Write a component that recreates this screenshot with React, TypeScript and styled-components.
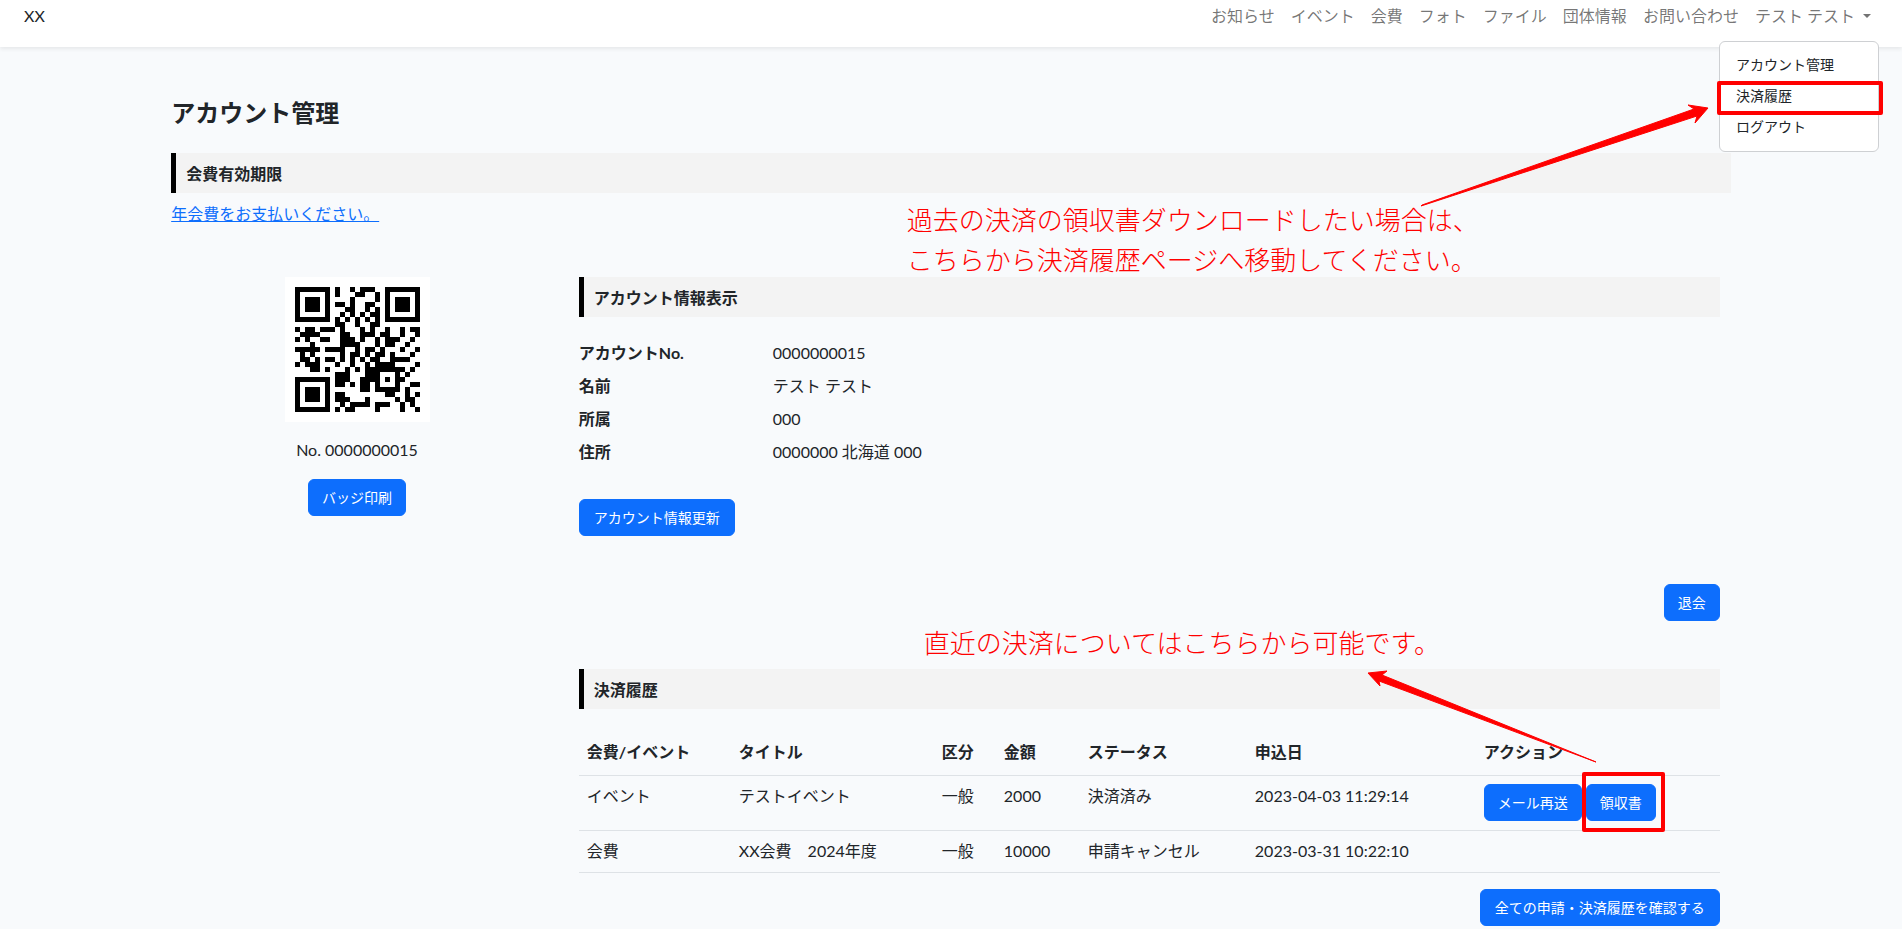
import React from 'react';
import styled, { createGlobalStyle } from 'styled-components';

const GlobalStyle = createGlobalStyle`
  *, *::before, *::after { box-sizing: border-box; }
  body {
    margin: 0;
    background: #f8fafc;
    color: #212529;
    font-family: Lato, "Noto Sans CJK JP", sans-serif;
    font-size: 16px;
    font-weight: 400;
    line-height: 25px;
  }
  h1, h2, p, dl, dd, ul { margin: 0; padding: 0; }
  button { font-family: inherit; font-weight: inherit; }
`;

const Header = styled.header`
  position: relative;
  z-index: 2;
  display: flex;
  justify-content: space-between;
  align-items: flex-start;
  height: 47px;
  padding: 3px 23px 0 24px;
  background: #fff;
  box-shadow: 0 2px 4px rgba(0, 0, 0, 0.075);
`;

const Brand = styled.a`
  color: #212529;
  text-decoration: none;
`;

const Nav = styled.nav`
  display: flex;
`;

const NavLink = styled.a`
  padding: 0 8px;
  color: rgba(0, 0, 0, 0.55);
  text-decoration: none;
  white-space: nowrap;
`;

const Dropdown = styled.div`
  position: relative;
`;

const DropdownToggle = styled.button`
  display: flex;
  align-items: center;
  gap: 8px;
  padding: 0 8px;
  border: 0;
  background: none;
  color: rgba(0, 0, 0, 0.55);
  font-size: 16px;
  line-height: 25px;
  white-space: nowrap;

  &::after {
    content: "";
    border-top: 4px solid;
    border-left: 4px solid transparent;
    border-right: 4px solid transparent;
  }
`;

const DropdownMenu = styled.div`
  position: absolute;
  top: 38px;
  right: 0;
  width: 160px;
  padding: 7px 0 9px;
  border: 1px solid #ced0d3;
  border-radius: 6px;
  background: #fff;
`;

const DropdownItem = styled.a<{ $marked?: boolean }>`
  position: relative;
  display: block;
  padding: 3px 16px;
  color: #212529;
  font-size: 14px;
  text-decoration: none;

  &::after {
    content: ${(p) => (p.$marked ? '""' : 'none')};
    position: absolute;
    inset: 1px -5px -4px -3px;
    border: 4px solid #f00;
    border-radius: 2px;
  }
`;

const Main = styled.main`
  margin: 0 9%;
  padding: 48px 0 4px;
`;

const PageTitle = styled.h1`
  margin-bottom: 22px;
  font-size: 24px;
  font-weight: 600;
  line-height: 36px;
`;

const SectionTitle = styled.h2`
  padding: 8px 10px 7px;
  border-left: 5px solid #000;
  background: #f3f3f3;
  font-size: 16px;
  font-weight: 700;
  line-height: 25px;
`;

const FeeNotice = styled.p`
  padding-top: 8px;
`;

const TextLink = styled.a`
  color: #0d6efd;
`;

const Columns = styled.div`
  display: flex;
  gap: 36px;
  margin-top: 51px;
  padding-right: 11px;
`;

const BadgeColumn = styled.aside`
  display: flex;
  flex: 0 0 24%;
  flex-direction: column;
  align-items: center;
`;

const QrImage = styled.svg`
  width: 145px;
  height: 145px;
  margin-bottom: 15px;
  background: #fff;
`;

const BadgeNumber = styled.p`
  margin-bottom: 17px;
`;

const Details = styled.div`
  flex: 1;
  min-width: 0;
`;

const Section = styled.section`
  position: relative;
`;

const Button = styled.button<{ $wide?: boolean }>`
  padding: 5px ${(p) => (p.$wide ? 14 : 13)}px;
  border: 1px solid #0d6efd;
  border-radius: 6px;
  background: #0d6efd;
  color: #fff;
  font-size: 14px;
  font-weight: 400;
  line-height: 25px;
  white-space: nowrap;
`;

const Profile = styled.dl`
  display: grid;
  grid-template-columns: 17% 1fr;
  row-gap: 8px;
  margin: 23px 0 35px;
`;

const ProfileLabel = styled.dt`
  font-weight: 700;
`;

const EndRow = styled.div<{ $top: number; $bottom: number }>`
  display: flex;
  justify-content: flex-end;
  padding: ${(p) => p.$top}px 0 ${(p) => p.$bottom}px;
`;

const Table = styled.table`
  width: 100%;
  margin-top: 25px;
  border-collapse: collapse;
  table-layout: fixed;
  text-align: left;
`;

const HeadCell = styled.th`
  height: 41px;
  padding: 5px 8px 11px;
  border-bottom: 1px solid #dee2e6;
  font-weight: 700;
  white-space: nowrap;
`;

const Cell = styled.td`
  padding: 7px 8px 9px;
  border-bottom: 1px solid #dee2e6;
  vertical-align: top;
  white-space: nowrap;
`;

const Actions = styled.div`
  display: flex;
  gap: 4px;
  padding-top: 1px;
`;

const Marked = styled.div`
  position: relative;

  &::after {
    content: "";
    position: absolute;
    inset: -12px -9px -11px -4px;
    border: 4px solid #f00;
    border-radius: 2px;
  }
`;

const Note = styled.p<{ $top: number; $left: number }>`
  position: absolute;
  top: ${(p) => p.$top}px;
  left: ${(p) => p.$left}px;
  color: #f00;
  font-size: 26px;
  font-weight: 300;
  line-height: 40px;
  white-space: nowrap;
`;

const MenuArrow = styled.svg`
  position: absolute;
  top: 58px;
  right: calc(100% + 10px);
  width: 290px;
  height: 110px;
  fill: #f00;
  pointer-events: none;
`;

const ReceiptArrow = styled.svg`
  position: absolute;
  top: -1px;
  right: 123px;
  width: 232px;
  height: 96px;
  fill: #f00;
  pointer-events: none;
`;

const qrRows = [
  '1111111010010111001111111',
  '1000001010001100101000001',
  '1011101000010000101011101',
  '1011101011010011001011101',
  '1011101000110010101011101',
  '1000001001010101101000001',
  '1111111010101010101111111',
  '0000000011001001100000000',
  '1011011101000101001001011',
  '0111100001100111011001001',
  '1010011001110100101110010',
  '0001000001111000101100100',
  '1111101111001011010001001',
  '0101000001011010110100010',
  '0110101101010101100111100',
  '1011100010010010111100001',
  '0001101000101011111111010',
  '0000000011100011100010100',
  '1111111011100111101011000',
  '1000001011010110100010011',
  '1011101000000110111110100',
  '1011101011000000001100101',
  '1011101011100010000010110',
  '1000001001011110111001010',
  '1111111010110000100001001',
];

const qrPath = qrRows
  .map((row, y) =>
    [...row].map((bit, x) => (bit === '1' ? `M${x + 2} ${y + 2}h1v1h-1z` : '')).join('')
  )
  .join('');

const navItems = ['お知らせ', 'イベント', '会費', 'フォト', 'ファイル', '団体情報', 'お問い合わせ'];

const profile = [
  ['アカウントNo.', '0000000015'],
  ['名前', 'テスト テスト'],
  ['所属', '000'],
  ['住所', '0000000 北海道 000'],
];

const columns = [
  { label: '会費/イベント', width: 152 },
  { label: 'タイトル', width: 203 },
  { label: '区分', width: 62 },
  { label: '金額', width: 84 },
  { label: 'ステータス', width: 167 },
  { label: '申込日', width: 229 },
  { label: 'アクション', width: undefined },
];

const payments = [
  { cells: ['イベント', 'テストイベント', '一般', '2000', '決済済み', '2023-04-03 11:29:14'], paid: true },
  { cells: ['会費', 'XX会費　2024年度', '一般', '10000', '申請キャンセル', '2023-03-31 10:22:10'], paid: false },
];

export default function App() {
  return (
    <>
      <GlobalStyle />
      <Header>
        <Brand href="#">XX</Brand>
        <Nav>
          {navItems.map((item) => (
            <NavLink key={item} href="#">{item}</NavLink>
          ))}
          <Dropdown>
            <DropdownToggle type="button" aria-expanded="true">テスト テスト</DropdownToggle>
            <DropdownMenu>
              <DropdownItem href="#">アカウント管理</DropdownItem>
              <DropdownItem href="#" $marked>決済履歴</DropdownItem>
              <DropdownItem href="#">ログアウト</DropdownItem>
              <MenuArrow viewBox="0 0 290 110" aria-hidden="true">
                <path d="M1 106 L2 105 L274 9 L268 5 L288 8 L275 23 L277 16 Z" stroke="#f00" strokeWidth="1" />
              </MenuArrow>
            </DropdownMenu>
          </Dropdown>
        </Nav>
      </Header>

      <Main>
        <PageTitle>アカウント管理</PageTitle>
        <SectionTitle>会費有効期限</SectionTitle>
        <FeeNotice>
          <TextLink href="#">年会費をお支払いください。</TextLink>
        </FeeNotice>

        <Columns>
          <BadgeColumn>
            <QrImage viewBox="0 0 29 29" shapeRendering="crispEdges" role="img" aria-label="QR">
              <path d={qrPath} />
            </QrImage>
            <BadgeNumber>No. 0000000015</BadgeNumber>
            <Button type="button">バッジ印刷</Button>
          </BadgeColumn>

          <Details>
            <Section>
              <SectionTitle>アカウント情報表示</SectionTitle>
              <Profile>
                {profile.map(([label, value]) => (
                  <React.Fragment key={label}>
                    <ProfileLabel>{label}</ProfileLabel>
                    <dd>{value}</dd>
                  </React.Fragment>
                ))}
              </Profile>
              <Button type="button" $wide>アカウント情報更新</Button>
              <Note $top={-77} $left={328}>
                過去の決済の領収書ダウンロードしたい場合は、
                <br />
                こちらから決済履歴ページへ移動してください。
              </Note>
            </Section>

            <EndRow $top={48} $bottom={48}>
              <Button type="button">退会</Button>
            </EndRow>

            <Section>
              <SectionTitle>決済履歴</SectionTitle>
              <Table>
                <colgroup>
                  {columns.map((c) => (
                    <col key={c.label} width={c.width} />
                  ))}
                </colgroup>
                <thead>
                  <tr>
                    {columns.map((c) => (
                      <HeadCell key={c.label} scope="col">{c.label}</HeadCell>
                    ))}
                  </tr>
                </thead>
                <tbody>
                  {payments.map((payment) => (
                    <tr key={payment.cells[5]}>
                      {payment.cells.map((text, i) => (
                        <Cell key={i}>{text}</Cell>
                      ))}
                      <Cell>
                        {payment.paid && (
                          <Actions>
                            <Button type="button">メール再送</Button>
                            <Marked>
                              <Button type="button">領収書</Button>
                            </Marked>
                          </Actions>
                        )}
                      </Cell>
                    </tr>
                  ))}
                </tbody>
              </Table>
              <Note $top={-46} $left={345}>直近の決済についてはこちらから可能です。</Note>
              <ReceiptArrow viewBox="0 0 232 96" aria-hidden="true">
                <path d="M231 94 L17 7 L22 3 L3 5 L15 18 L14 13 Z" stroke="#f00" strokeWidth="1" />
              </ReceiptArrow>
            </Section>

            <EndRow $top={16} $bottom={0}>
              <Button type="button" $wide>全ての申請・決済履歴を確認する</Button>
            </EndRow>
          </Details>
        </Columns>
      </Main>
    </>
  );
}
